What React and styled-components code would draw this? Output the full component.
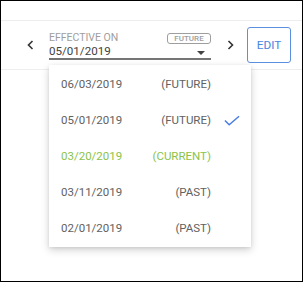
import styled, { createGlobalStyle } from 'styled-components';

const GlobalStyle = createGlobalStyle`
  body {
    margin: 0;
    font-family: Roboto, "Liberation Sans", sans-serif;
  }
`;

const Frame = styled.div`
  width: 303px;
  height: 282px;
  box-sizing: border-box;
  border: 1px solid #000;
  background: #fff;
`;

const Bar = styled.div`
  margin-top: 19px;
  height: 48px;
  box-sizing: content-box;
  border-top: 1px solid #eeeeee;
  border-bottom: 1px solid #eeeeee;
  display: flex;
  align-items: center;
  padding-left: 23px;
`;

const NavButton = styled.button`
  width: 12px;
  height: 24px;
  padding: 0;
  border: none;
  background: none;
  display: flex;
  align-items: center;
  justify-content: center;
  color: #333;
  cursor: pointer;
`;

const Field = styled.div`
  position: relative;
  width: 162px;
  margin: 1px 13px 0;
  border-bottom: 2px solid #757575;
`;

const LabelRow = styled.div`
  display: flex;
  justify-content: space-between;
  align-items: flex-start;
  height: 13px;
`;

const Label = styled.span`
  font-size: 10.5px;
  line-height: 13px;
  color: #9e9e9e;
  text-transform: uppercase;
`;

const Chip = styled.span`
  margin-top: 2px;
  width: 44px;
  height: 11px;
  box-sizing: border-box;
  border: 1px solid #9e9e9e;
  border-radius: 3px;
  font-size: 8px;
  font-weight: 500;
  color: #9e9e9e;
  display: flex;
  align-items: center;
  justify-content: center;
`;

const ValueRow = styled.div`
  display: flex;
  justify-content: space-between;
  align-items: center;
  height: 14px;
  padding-right: 6px;
`;

const Value = styled.span`
  font-size: 11.6px;
  line-height: 14px;
  color: #424242;
`;

const Caret = styled.span`
  width: 0;
  height: 0;
  margin-top: 4px;
  border-left: 4px solid transparent;
  border-right: 4px solid transparent;
  border-top: 4px solid #424242;
`;

const EditButton = styled.button`
  width: 44px;
  height: 36px;
  padding: 0;
  margin-left: 11px;
  border: 1px solid #5b8fe0;
  border-radius: 3px;
  background: #fff;
  color: #4a86e0;
  font-family: Roboto, "Liberation Sans", sans-serif;
  font-size: 11.8px;
  cursor: pointer;
`;

const Menu = styled.ul`
  position: absolute;
  top: 34px;
  left: 0;
  width: 202px;
  margin: 0;
  padding: 1px 0;
  list-style: none;
  background: #fff;
  box-shadow: 0 3px 8px rgba(0, 0, 0, 0.18), 0 1px 3px rgba(0, 0, 0, 0.08);
  z-index: 2;
`;

const Item = styled.li`
  height: 36px;
  display: flex;
  align-items: center;
  padding: 0 11px 0 12px;
  font-size: 11.5px;
  color: ${(p) => (p.$current ? '#8bc34a' : '#616161')};
`;

const ItemDate = styled.span`
  flex: 1;
`;

const ItemStatus = styled.span`
  text-align: right;
`;

const CheckSlot = styled.span`
  width: 16px;
  height: 11px;
  margin-left: 13px;
  display: flex;
  align-items: center;
`;

const Chevron = ({ dir }) => (
  <svg width="7" height="10" viewBox="0 0 7 10">
    <polyline
      points={dir === 'left' ? '5.5,1 1.5,5 5.5,9' : '1.5,1 5.5,5 1.5,9'}
      fill="none"
      stroke="currentColor"
      strokeWidth="1.6"
    />
  </svg>
);

const Check = () => (
  <svg width="17" height="11" viewBox="0 0 17 11">
    <polyline points="1,5.5 5.5,10 16,1" fill="none" stroke="#4a7fe0" strokeWidth="1.6" />
  </svg>
);

const versions = [
  { date: '06/03/2019', status: 'FUTURE' },
  { date: '05/01/2019', status: 'FUTURE', selected: true },
  { date: '03/20/2019', status: 'CURRENT' },
  { date: '03/11/2019', status: 'PAST' },
  { date: '02/01/2019', status: 'PAST' },
];

export default function App() {
  return (
    <Frame>
      <GlobalStyle />
      <Bar>
        <NavButton>
          <Chevron dir="left" />
        </NavButton>
        <Field>
          <LabelRow>
            <Label>Effective on</Label>
            <Chip>FUTURE</Chip>
          </LabelRow>
          <ValueRow>
            <Value>05/01/2019</Value>
            <Caret />
          </ValueRow>
          <Menu>
            {versions.map((v) => (
              <Item key={v.date} $current={v.status === 'CURRENT'}>
                <ItemDate>{v.date}</ItemDate>
                <ItemStatus>({v.status})</ItemStatus>
                <CheckSlot>{v.selected && <Check />}</CheckSlot>
              </Item>
            ))}
          </Menu>
        </Field>
        <NavButton>
          <Chevron dir="right" />
        </NavButton>
        <EditButton>EDIT</EditButton>
      </Bar>
    </Frame>
  );
}
